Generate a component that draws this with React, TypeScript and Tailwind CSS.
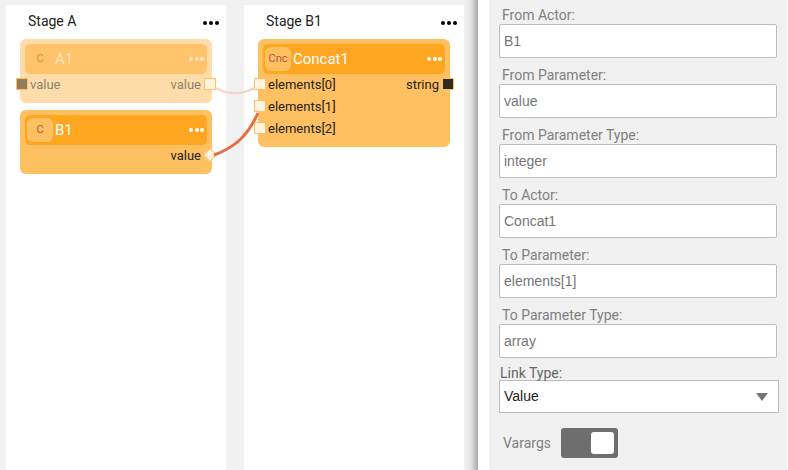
import React from "react";

const Dots = ({ className, tight }: { className: string; tight?: boolean }) => (
	<div className={`flex ${tight ? "gap-[1.5px]" : "gap-[2px]"} ${className}`}>
		<span className="w-1 h-1 rounded-full bg-current"></span>
		<span className="w-1 h-1 rounded-full bg-current"></span>
		<span className="w-1 h-1 rounded-full bg-current"></span>
	</div>
);

const NodeHeader = ({ icon, title, faded }: { icon: string; title: string; faded?: boolean }) => (
	<div className={`flex items-center h-[30px] rounded-[5px] pl-[2px] pr-[3px] ${faded ? "bg-[#ffc46b]" : "bg-[#ffa620]"}`}>
		<div
			className={`w-[26px] h-[24px] rounded-[6px] flex items-center justify-center text-[11px] ${
				faded ? "text-[#e08a50]" : "bg-[#ffc062] text-[#b5563a]"
			}`}
		>
			{icon}
		</div>
		<span className={`ml-[2px] flex-1 text-[15px] ${faded ? "text-[#ffe6c0]" : "text-white"}`}>{title}</span>
		<Dots tight className={faded ? "text-[#ffe6c0]" : "text-white"} />
	</div>
);

const Port = ({ side, className }: { side: "left" | "right"; className: string }) => (
	<span
		className={`absolute top-[4px] w-[12px] h-[12px] border border-[#ffc062] ${side === "left" ? "left-[-4px]" : "right-[-4px]"} ${className}`}
	></span>
);

const Row = ({ children }: { children: React.ReactNode }) => (
	<div className="relative flex justify-between h-[22px] items-center pb-[2px] pl-[10px] pr-[11px] text-[13px] leading-none text-[#222222]">
		{children}
	</div>
);

const StageHead = ({ title }: { title: string }) => (
	<div className="flex items-center justify-between h-[34px] pl-[22px] pr-[7px] text-[14px] text-[#222222]">
		<span className="-mt-[2px]">{title}</span>
		<Dots className="text-black mt-[2px]" />
	</div>
);

const Field = ({ label, value }: { label: string; value: string }) => (
	<div className="mb-[8px]">
		<div className="h-[18px] pl-[13px] text-[14px] leading-[18px] text-[#808080] whitespace-nowrap">{label}</div>
		<div
			className="ml-[10px] mr-[10px] h-[34px] bg-white border border-[#bdbdbd] rounded-[2px] px-[4px] flex items-center text-[14px] text-[#757575]"
			style={{ fontFamily: '"Liberation Sans", sans-serif' }}
		>
			{value}
		</div>
	</div>
);

const App = () => {
	return (
		<div
			className="relative flex w-[788px] h-[470px] overflow-hidden bg-[#f1f1f1]"
			style={{ fontFamily: "Roboto, sans-serif" }}
		>
			<div className="flex w-[464px] pt-[5px] pl-[6px] gap-[18px] shrink-0">
				<div className="w-[220px] bg-white">
					<StageHead title="Stage A" />
					<div className="px-[14px] flex flex-col gap-[7px]">
						<div className="rounded-[6px] bg-[#ffddab] h-[64px] pt-[5px]">
							<div className="mx-[5px]">
								<NodeHeader icon="C" title="A1" faded />
							</div>
							<Row>
								<Port side="left" className="bg-[#8e7d62]" />
								<span className="text-[#8e8370]">value</span>
								<span className="text-[#8e8370]">value</span>
								<Port side="right" className="bg-[#fff4e2]" />
							</Row>
						</div>
						<div className="rounded-[6px] bg-[#ffc062] h-[64px] pt-[5px]">
							<div className="mx-[5px]">
								<NodeHeader icon="C" title="B1" />
							</div>
							<Row>
								<span></span>
								<span>value</span>
								<span className="absolute right-[-3px] top-[5px] w-[10px] h-[10px] rotate-45 bg-[#fff4e2] border border-[#ffc062]"></span>
							</Row>
						</div>
					</div>
				</div>
				<div className="w-[220px] bg-white">
					<StageHead title="Stage B1" />
					<div className="px-[14px]">
						<div className="rounded-[6px] bg-[#ffc062] h-[108px] pt-[5px]">
							<div className="mx-[5px]">
								<NodeHeader icon="Cnc" title="Concat1" />
							</div>
							<Row>
								<Port side="left" className="bg-[#fff4e2]" />
								<span>elements[0]</span>
								<span>string</span>
								<Port side="right" className="bg-[#2e2a24]" />
							</Row>
							<Row>
								<Port side="left" className="bg-[#fff4e2]" />
								<span>elements[1]</span>
							</Row>
							<Row>
								<Port side="left" className="bg-[#fff4e2]" />
								<span>elements[2]</span>
							</Row>
						</div>
					</div>
				</div>
			</div>
			<div className="w-[14px] shrink-0 bg-gradient-to-r from-[#f1f1f1] via-[#e4e4e4] to-[#a8a8a8]"></div>
			<div className="w-[11px] shrink-0 bg-white"></div>
			<div className="w-[298px] shrink-0 pt-[6px]">
				<Field label="From Actor:" value="B1" />
				<Field label="From Parameter:" value="value" />
				<Field label="From Parameter Type:" value="integer" />
				<Field label="To Actor:" value="Concat1" />
				<Field label="To Parameter:" value="elements[1]" />
				<Field label="To Parameter Type:" value="array" />
				<div className="-mt-[2px] pl-[11px] h-[16px] text-[14px] leading-[18px] text-[#666666]">Link Type:</div>
				<div
					className="ml-[10px] mr-[8px] h-[33px] bg-white border border-[#bdbdbd] px-[4px] flex items-center justify-between text-[14px] text-[#222222]"
					style={{ fontFamily: '"Liberation Sans", sans-serif' }}
				>
					<span>Value</span>
					<span className="mr-[6px] w-0 h-0 border-x-[6px] border-x-transparent border-t-[8px] border-t-[#757575]"></span>
				</div>
				<div className="flex items-center mt-[15px] pl-[14px]">
					<span className="text-[14px] text-[#808080]">Varargs</span>
					<div className="ml-[10px] w-[57px] h-[30px] rounded-[3px] bg-[#6e6e6e] flex items-center justify-end pr-[4px]">
						<span className="w-[23px] h-[22px] rounded-[3px] bg-white"></span>
					</div>
				</div>
			</div>
			<div className="w-[1px] bg-white"></div>
			<svg className="absolute inset-0 pointer-events-none" width="788" height="470" fill="none">
				<path d="M216 88 C228 95 242 95 254 88" stroke="#f7d6c8" strokeWidth="2.5" />
				<path d="M214 155 C236 147 248 135 258 113" stroke="#e56f45" strokeWidth="3" />
			</svg>
		</div>
	);
};

export default App;
